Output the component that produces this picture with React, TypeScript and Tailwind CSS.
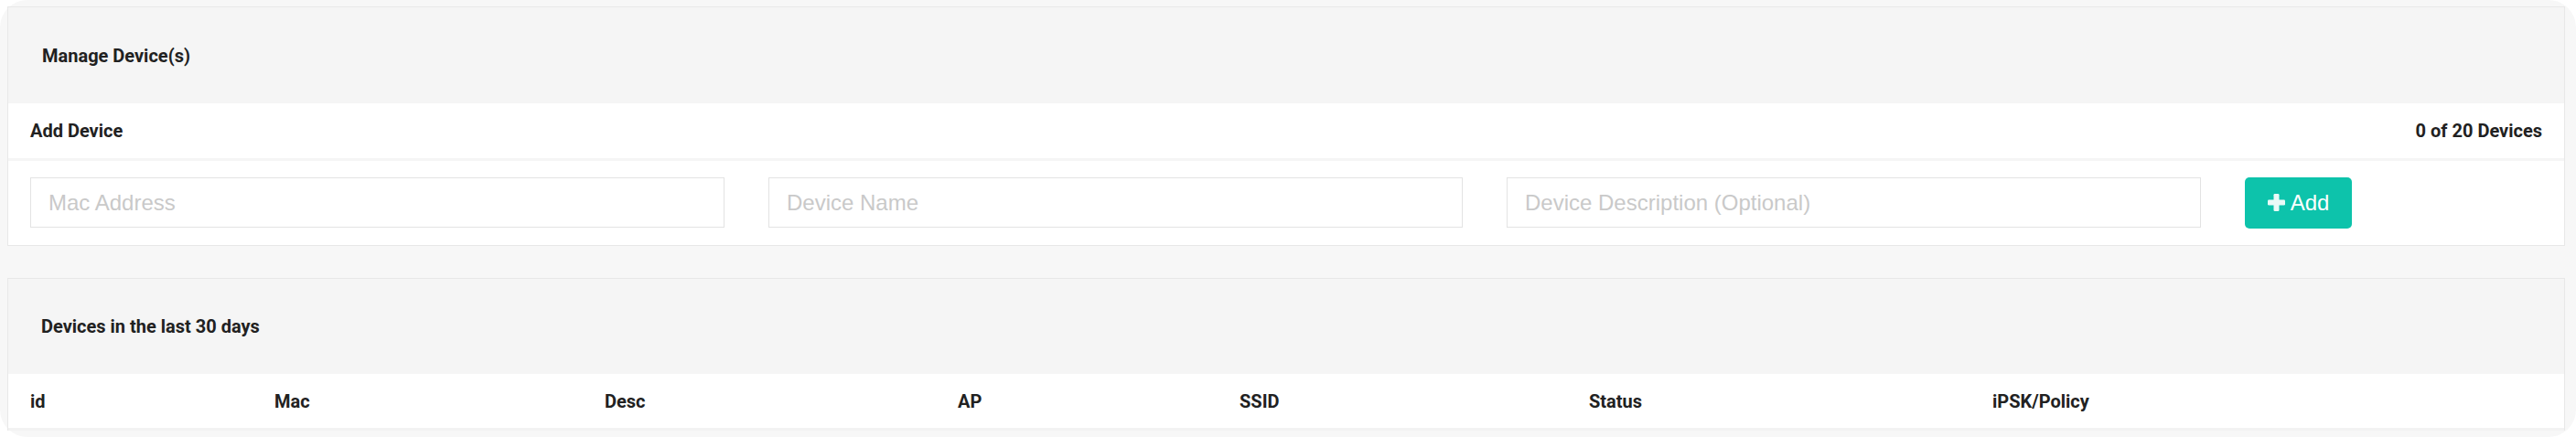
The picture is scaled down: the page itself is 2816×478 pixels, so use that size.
import { useState } from 'react'

const columns = ['id', 'Mac', 'Desc', 'AP', 'SSID', 'Status', 'iPSK/Policy']

export default function App() {
  const [mac, setMac] = useState('')
  const [name, setName] = useState('')
  const [desc, setDesc] = useState('')
  const devices: string[] = []

  return (
    <div className="bg-white">
      <div className="h-[478px] w-[2816px] rounded-[30px] bg-[#f7f7f7] pt-[7px] pl-[8px] pr-[12px] font-['Roboto',sans-serif] text-[#212121]">
        {/* Manage devices */}
        <div className="border border-[#e8e8e8] bg-white">
          <div className="flex h-[105px] items-center bg-[#f5f5f5] pl-[37px]">
            <h2 className="text-[20px] font-bold">Manage Device(s)</h2>
          </div>
          <div className="flex h-[60px] items-center justify-between px-[24px] text-[20px] font-bold">
            <span>Add Device</span>
            <span>{devices.length} of 20 Devices</span>
          </div>
          <div className="h-[3px] bg-[#f5f5f5]" />
          <div className="flex h-[92px] items-center gap-[48px] px-[24px] pb-[1px]">
            <input
              value={mac}
              onChange={(e) => setMac(e.target.value)}
              placeholder="Mac Address"
              className="h-[55px] w-[759px] border border-[#e3e3e3] bg-white px-[19px] font-['Liberation_Sans',Arial,sans-serif] text-[24px] text-[#333] outline-none placeholder:text-[#c9c9c9]"
            />
            <input
              value={name}
              onChange={(e) => setName(e.target.value)}
              placeholder="Device Name"
              className="h-[55px] w-[759px] border border-[#e3e3e3] bg-white px-[19px] font-['Liberation_Sans',Arial,sans-serif] text-[24px] text-[#333] outline-none placeholder:text-[#c9c9c9]"
            />
            <input
              value={desc}
              onChange={(e) => setDesc(e.target.value)}
              placeholder="Device Description (Optional)"
              className="h-[55px] w-[759px] border border-[#e3e3e3] bg-white px-[19px] font-['Liberation_Sans',Arial,sans-serif] text-[24px] text-[#333] outline-none placeholder:text-[#c9c9c9]"
            />
            <button className="flex h-[56px] w-[117px] items-center justify-center gap-[6px] rounded-[5px] bg-[#0dc3ab] font-['Liberation_Sans',Arial,sans-serif] text-[24px] text-white">
              <svg width="19" height="19" viewBox="0 0 19 19" fill="#eafaf7">
                <rect x="6.5" y="0" width="6" height="19" rx="1.2" />
                <rect x="0" y="6.5" width="19" height="6" rx="1.2" />
              </svg>
              Add
            </button>
          </div>
        </div>

        {/* Devices list */}
        <div className="mt-[35px] border-t border-x border-[#e8e8e8] bg-white">
          <div className="flex h-[104px] items-center bg-[#f5f5f5] pl-[36px]">
            <h2 className="text-[20px] font-bold">Devices in the last 30 days</h2>
          </div>
          <div className="grid h-[62px] grid-cols-[267px_361px_386px_308px_382px_441px_1fr] items-center border-b-[3px] border-[#f2f2f2] text-[20px] font-bold">
            {columns.map((c) => (
              <div key={c} className="pl-[24px]">
                {c}
              </div>
            ))}
          </div>
        </div>
      </div>
    </div>
  )
}
